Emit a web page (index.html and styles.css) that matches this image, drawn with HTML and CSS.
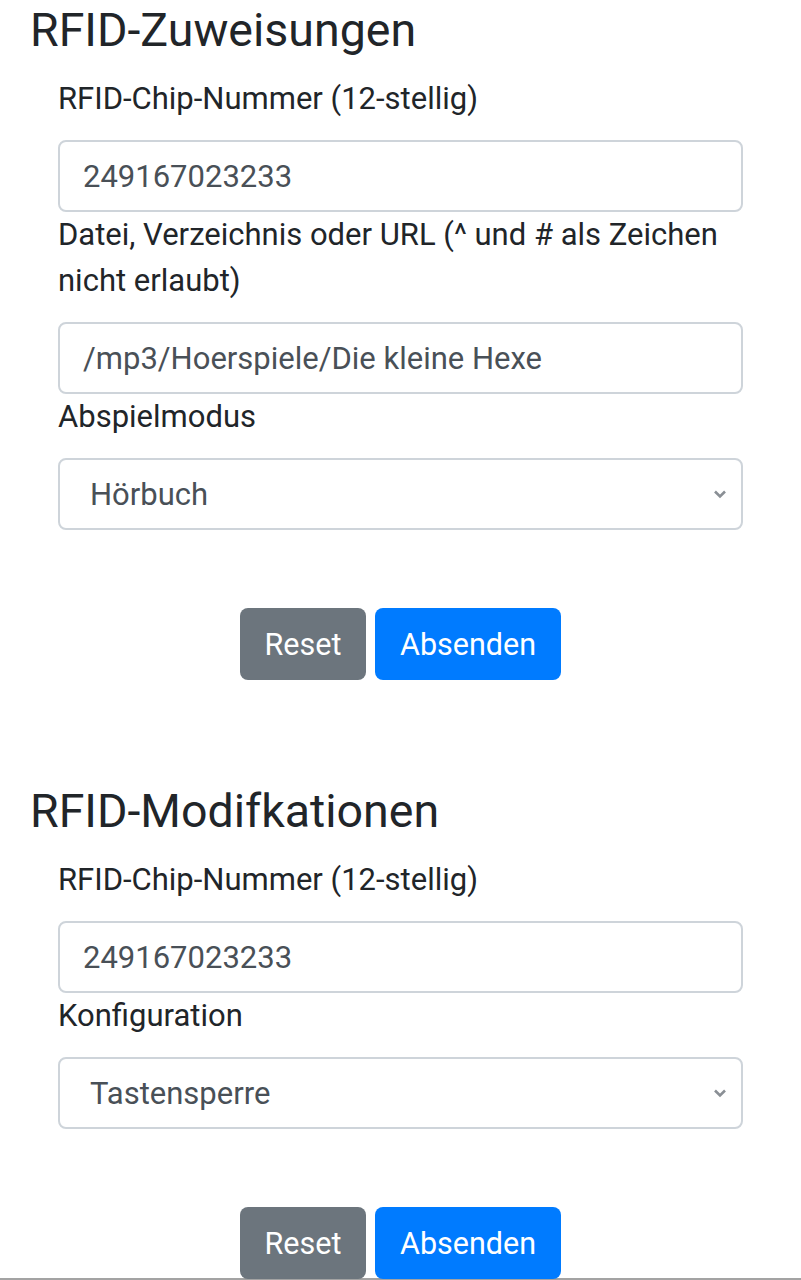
FILE: index.html
```html
<!DOCTYPE html>
<html lang="de">
<head>
<meta charset="utf-8">
<title>RFID</title>
<link rel="stylesheet" href="styles.css">
</head>
<body>
<main class="page">
  <section class="card">
    <h4 class="title">RFID-Zuweisungen</h4>
    <form class="form">
      <label class="label">RFID-Chip-Nummer (12-stellig)</label>
      <div class="control">249167023233</div>
      <label class="label">Datei, Verzeichnis oder URL (^ und # als Zeichen nicht erlaubt)</label>
      <div class="control">/mp3/Hoerspiele/Die kleine Hexe</div>
      <label class="label">Abspielmodus</label>
      <div class="control select"><span>Hörbuch</span>
        <svg class="chev" width="14" height="10" viewBox="0 0 14 10"><path d="M2 2.5 L7 7.5 L12 2.5" fill="none" stroke="#8a8f95" stroke-width="2.6"/></svg>
      </div>
      <div class="actions">
        <span class="btn btn-reset">Reset</span>
        <span class="btn btn-send">Absenden</span>
      </div>
    </form>
  </section>
  <section class="card second">
    <h4 class="title">RFID-Modifkationen</h4>
    <form class="form">
      <label class="label">RFID-Chip-Nummer (12-stellig)</label>
      <div class="control">249167023233</div>
      <label class="label">Konfiguration</label>
      <div class="control select"><span>Tastensperre</span>
        <svg class="chev" width="14" height="10" viewBox="0 0 14 10"><path d="M2 2.5 L7 7.5 L12 2.5" fill="none" stroke="#8a8f95" stroke-width="2.6"/></svg>
      </div>
      <div class="actions">
        <span class="btn btn-reset">Reset</span>
        <span class="btn btn-send">Absenden</span>
      </div>
    </form>
  </section>
</main>
<div class="bottom-line"></div>
</body>
</html>
```
FILE: styles.css
```css
html, body {
  margin: 0;
  padding: 0;
  background: #fff;
}
body {
  font-family: Roboto, "Noto Sans", sans-serif;
  color: #212529;
  overflow: hidden;
  height: 1280px;
}
.page {
  padding: 0 30px;
}
.title {
  margin: 0;
  padding-top: 4px;
  font-size: 46.5px;
  font-weight: 400;
  line-height: 52px;
}
.second {
  margin-top: 101px;
}
.form {
  display: flex;
  flex-direction: column;
  padding: 20px 28px 0;
}
.label {
  font-size: 31px;
  line-height: 46px;
  margin-bottom: 18px;
}
.control {
  height: 72px;
  box-sizing: border-box;
  border: 2px solid #ced4da;
  border-radius: 8px;
  padding: 0 23px;
  display: flex;
  align-items: center;
  font-size: 31px;
  color: #495057;
}
.select {
  padding-left: 30px;
  justify-content: space-between;
  padding-right: 14px;
}
.actions {
  display: flex;
  justify-content: center;
  gap: 9px;
  margin-top: 78px;
  position: relative;
  z-index: 1;
}
.btn {
  height: 72px;
  border-radius: 8px;
  color: #fff;
  font-size: 30.5px;
  display: flex;
  align-items: center;
  justify-content: center;
}
.btn-reset {
  width: 126px;
  background: #6c757d;
}
.btn-send {
  width: 186px;
  background: #007bff;
}
.bottom-line {
  position: fixed;
  left: 0;
  right: 0;
  bottom: 0;
  height: 2px;
  background: #a3a3a3;
}
```
